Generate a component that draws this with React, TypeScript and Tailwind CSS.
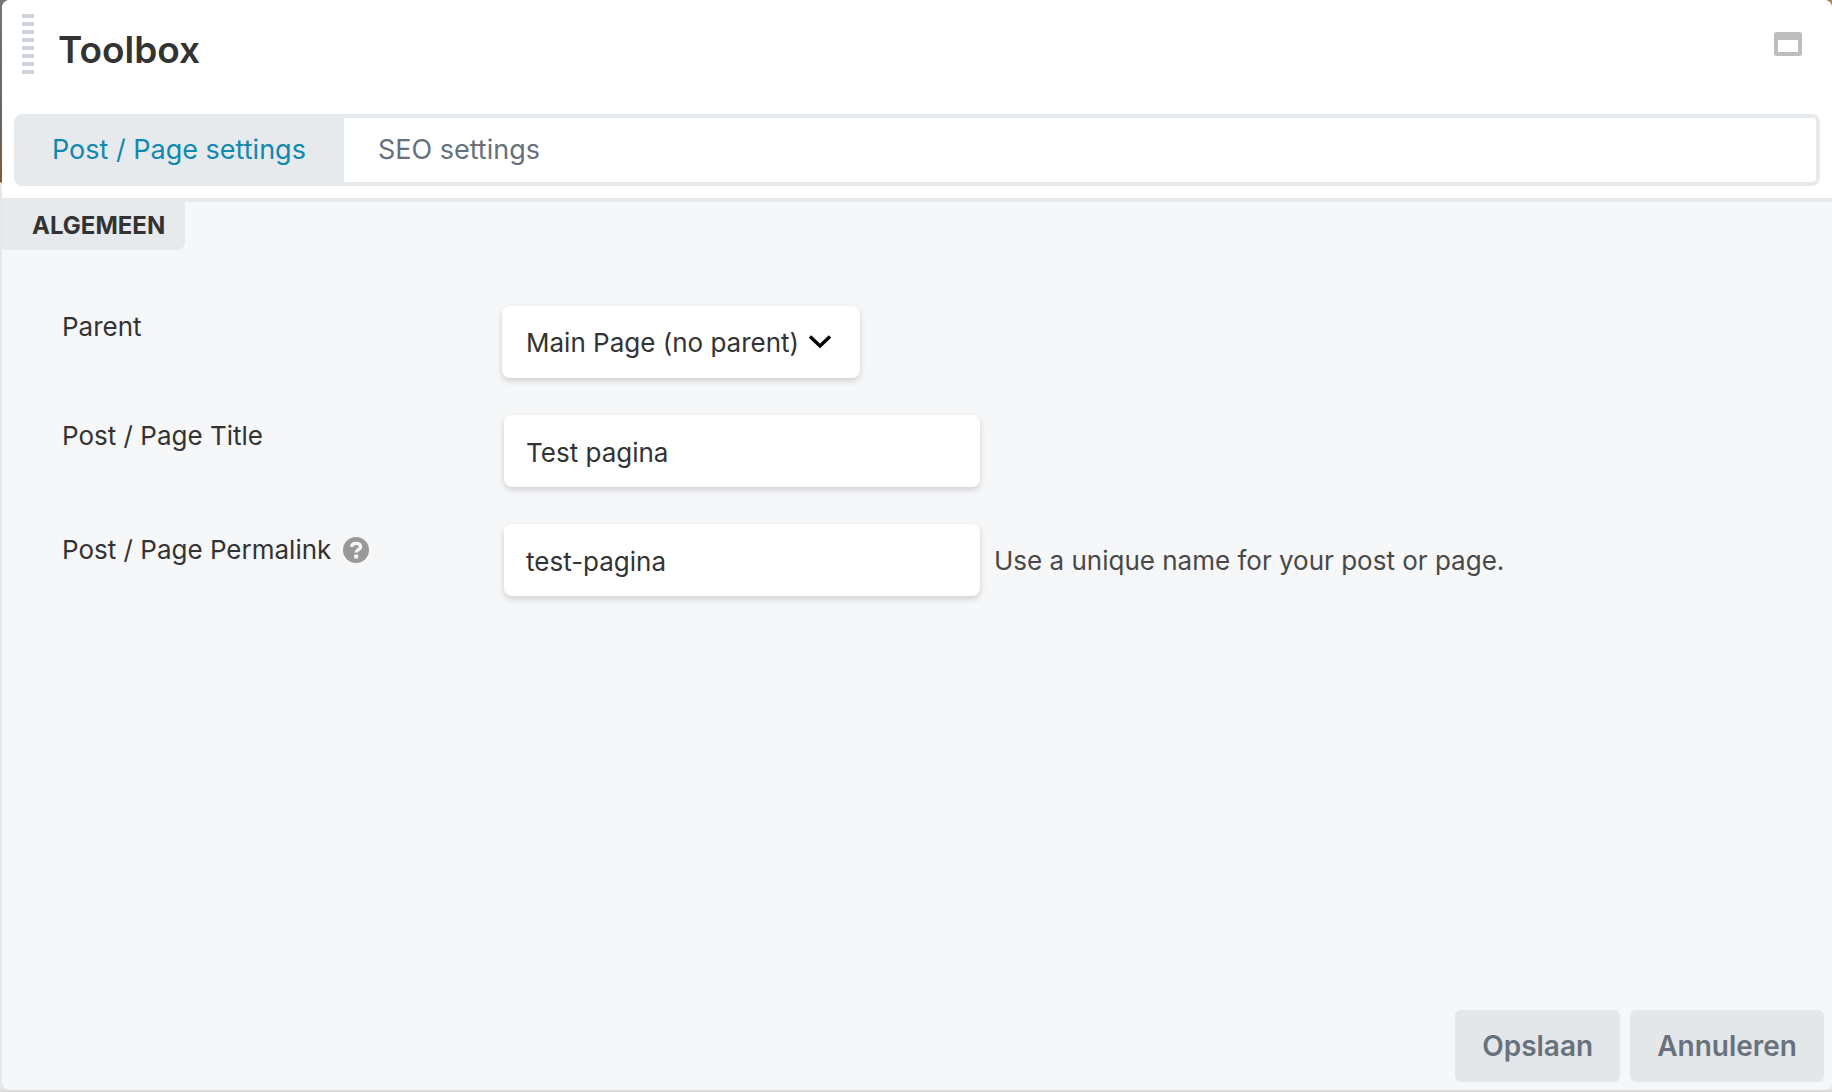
import { useState } from 'react';

const tabs = ['Post / Page settings', 'SEO settings'];

const fieldClass =
  'h-[72px] rounded-lg bg-white pt-0.5 text-[26px] text-[#333] shadow-[0_3px_6px_rgba(0,0,0,0.16)] outline-none';

function WindowIcon() {
  return (
    <svg width="28" height="24" viewBox="0 0 28 24" aria-hidden="true">
      <path fill="#bdbdbd" fillRule="evenodd" d="M2.500 0h23a2.500 2.500 0 0 1 2.500 2.500v19a2.500 2.500 0 0 1-2.500 2.500h-23A2.500 2.500 0 0 1 0 21.500v-19A2.500 2.500 0 0 1 2.500 0zM4 8v12h20V8z" />
    </svg>
  );
}

function HelpIcon() {
  return (
    <svg width="26" height="26" viewBox="0 0 26 26" aria-hidden="true">
      <circle cx="13" cy="13" r="13" fill="#999" />
      <path d="M8.600 9.800C8.800 7.600 10.600 6.400 13 6.400c2.700 0 4.500 1.400 4.500 3.500 0 3-4.300 2.800-4.300 5.600" fill="none" stroke="#f6f7f9" strokeWidth="3.400" />
      <rect x="11.200" y="17.600" width="4" height="4" rx="0.600" fill="#f6f7f9" />
    </svg>
  );
}

export default function App() {
  const [activeTab, setActiveTab] = useState(0);
  const [title, setTitle] = useState('Test pagina');
  const [permalink, setPermalink] = useState('test-pagina');

  return (
    <div className="flex min-h-screen flex-col bg-[#e6e7e9] bg-[linear-gradient(#a5865f,#a5865f),linear-gradient(#dadada,#dadada),linear-gradient(#737578,#66676b_110px,#7d5a3c_170px,#85592f_182px,#e6e7e9_183px)] bg-[length:12px_12px,100%_2px,12px_100%] bg-[position:right_top,left_bottom,left_top] bg-no-repeat pb-0.5 pl-0.5 font-['Inter',sans-serif] text-[#333]">
      <div className="flex grow flex-col overflow-hidden rounded-lg bg-[#f6f7f9]">
        {/* Header */}
        <header className="border-b-4 border-[#e8e9ea] bg-white px-3 pb-3">
          <div className="flex h-[114px] items-start justify-between">
            <div className="flex gap-6 pt-[14px] pl-2">
              <div className="flex w-3 flex-col gap-1">
                {[...Array(8)].map((_, i) => (
                  <span key={i} className="h-1 bg-[#cdd3da]" />
                ))}
              </div>
              <h1 className="pt-3 text-[37px] leading-[48px] font-semibold">Toolbox</h1>
            </div>
            <button type="button" aria-label="Maximize" className="mt-8 mr-[18px]">
              <WindowIcon />
            </button>
          </div>

          {/* Tabs */}
          <div role="tablist" className="flex h-[72px] rounded-lg border-4 border-[#e6eaed]">
            {tabs.map((tab, i) => (
              <button
                key={tab}
                type="button"
                role="tab"
                aria-selected={i === activeTab}
                onClick={() => setActiveTab(i)}
                className={
                  i === activeTab
                    ? 'rounded-l bg-[#e6eaed] pr-[38px] pl-[34px] text-[27px] text-[#1188b0]'
                    : 'pr-[38px] pl-[34px] text-[27px] text-[#66717c]'
                }
              >
                {tab}
              </button>
            ))}
          </div>
        </header>

        {/* Settings */}
        <main>
          <h2 className="flex h-12 w-fit items-center rounded-br-lg bg-[#e6eaed] pr-5 pl-[30px] text-2xl font-bold">
            ALGEMEEN
          </h2>

          <form className="mt-14 flex flex-col gap-[37px] pl-[60px] text-[26px] leading-8">
            <div className="flex">
              <div className="w-[440px] pt-[5px]">
                <label htmlFor="parent">Parent</label>
              </div>
              <div className="relative">
                <select id="parent" className={`${fieldClass} w-[358px] appearance-none pl-6`}>
                  <option>Main Page (no parent)</option>
                </select>
                <svg className="pointer-events-none absolute top-7 right-7 h-4 w-6" viewBox="0 0 24 16" fill="none" stroke="#000" strokeWidth="3.400" aria-hidden="true">
                  <path d="M2 2.500l10 9.500 10-9.500" />
                </svg>
              </div>
            </div>

            <div className="flex">
              <div className="w-[442px] pt-[5px]">
                <label htmlFor="title">Post / Page Title</label>
              </div>
              <input id="title" type="text" value={title} onChange={(e) => setTitle(e.target.value)} className={`${fieldClass} w-[476px] px-[22px]`} />
            </div>

            <div className="flex">
              <div className="flex h-[52px] w-[442px] items-center gap-3">
                <label htmlFor="permalink">Post / Page Permalink</label>
                <HelpIcon />
              </div>
              <div className="flex items-center gap-[14px]">
                <input id="permalink" type="text" value={permalink} onChange={(e) => setPermalink(e.target.value)} className={`${fieldClass} w-[476px] px-[22px]`} />
                <span className="pt-0.5 text-[#484848]">Use a unique name for your post or page.</span>
              </div>
            </div>
          </form>
        </main>

        {/* Actions */}
        <footer className="mt-auto flex justify-end gap-[10px] p-2 text-[28px] font-semibold text-[#69727c]">
          <button type="button" className="h-[72px] rounded-md bg-[#e3e7ea] px-[27px]">Opslaan</button>
          <button type="button" className="h-[72px] rounded-md bg-[#e3e7ea] px-[27px]">Annuleren</button>
        </footer>
      </div>
    </div>
  );
}
